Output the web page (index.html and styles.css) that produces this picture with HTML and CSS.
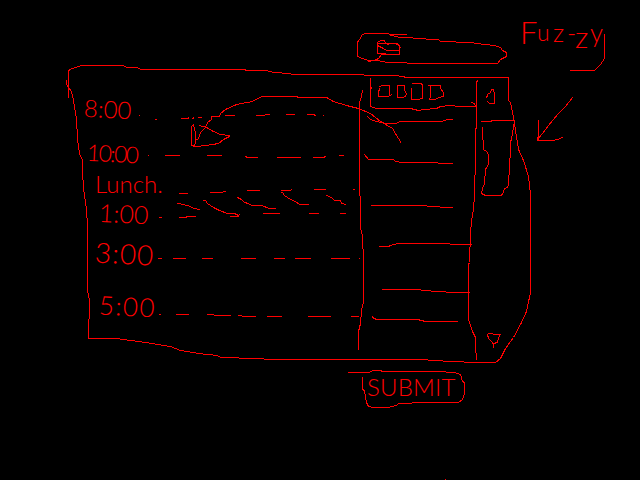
FILE: index.html
```
<!DOCTYPE html>
<html lang="en">
<head>
<meta charset="utf-8">
<title>Day planner sketch</title>
<link rel="stylesheet" href="styles.css">
</head>
<body>
<div class="page">
  <header class="top">
    <svg class="ink search" viewBox="340 0 180 65" width="180" height="65">
      <g transform="translate(.5 .5)">
        <path d="M406 34H389L388 33H364L361 35L359 40L357 41V56L362 58L368 60H379L380 61L388 62L425 63H497L500 59L506 56V52L502 50L500 47L494 45L484 44L470 42L440 41L438 39L413 38L412 37H398L397 36L390 35L388 33"/>
        <path d="M377 45V42L380 40H384L385 43H397L400 47L398 50H386L383 48L377 45V53H385M377 43H385L388 44L391 42M395 43L399 45V54H381L378 58L374 60L368 61"/>
      </g>
    </svg>
    <div class="brand">
      <span class="brand-f">F</span><span class="brand-u">u</span><span class="brand-z">z</span><span class="brand-dash">-</span><span class="brand-z2">z</span><span class="brand-y">y</span>
    </div>
  </header>

  <main class="middle">
    <section class="board">
      <svg class="ink board-lines" viewBox="0 65 535 300" width="535" height="300">
        <g transform="translate(.5 .5)">
          <!-- frame -->
          <path d="M68 97V71L69 69L75 67L81 65H122L127 67H136L141 69H244L246 70L265 70L274 72L289 73L292 74H363L364 75H397L400 76L408 77H508V100L510 102L513 117L515 130L518 149L523 160L528 176L530 194V292L526 311L521 322L513 337L505 348L500 358L495 362H469L457 361L428 360L427 359H271L256 358L220 357L217 355L198 353L180 350L170 346L145 342L123 339L116 338H88V319L89 318V300L87 290V223L85 200L84 197L82 174V160L79 153L77 139L76 118L73 100L71 91L68 87L66 84V79"/>
          <!-- column dividers -->
          <path d="M362 90L361 96L359 102V195L360 196V228L362 235V248L363 249V301L361 310L360 323L358 331V349"/>
          <path d="M477 80L476 82V127L475 129V174L474 175V195L473 208L471 221L470 232L469 262L468 264V319L472 331L475 337V352L476 353V359"/>
          <!-- toolbar -->
          <path d="M370 77V106L376 108H410L418 110L424 109L436 108L440 106L449 105L460 106H475L474 103L471 102M371 86V88"/>
          <path d="M379 86L382 85H389V95L388 96H378V92L379 88M389 95L392 94M396 85H404V90L406 93L405 96L402 97H397V85M411 84L412 83H421L422 85V98L417 99H411V87M427 85H440V88L443 92V96L438 97L435 99H429L430 96V85"/>
          <!-- scrollbar -->
          <path d="M487 101L489 103H494V94L493 89H491L490 92L487 94L486 98M480 121H490L492 120H514L513 127L511 139L510 141L509 174L508 175V184L507 187L504 188L502 194L500 195H485L481 193L482 188L484 183L485 168L487 167L488 163V154L486 151L483 149V140L482 139V126"/>
          <path d="M487 333H492L493 334H500L498 337L497 342L493 343V347M493 344L491 341L488 338L487 334"/>
          <!-- entries -->
          <path d="M367 116L370 119L376 121L386 123H396L399 121H441L447 119H452M364 154L368 159H393L395 161L402 162H437L438 163H452M370 205H426L427 206H439L440 207H452M378 246H388L390 245L397 243H449L450 244H471M381 289H420L421 290H430L431 291H445L446 292H469M372 315V317L376 319H417L425 321H457"/>
          <!-- drag arrow -->
          <path d="M401 143L398 138L392 128L380 121L370 113L358 108L346 105L333 101L326 97H298L296 96H262L257 98L252 101L236 104L225 109L220 113L219 116H211V119L207 122L205 127L200 132L198 138L195 140M193 124L191 126V145L194 146L195 142V133L193 124M199 125L206 127L213 131L220 134L229 135V136L223 139L218 143L206 145L196 146L193 145"/>
          <!-- slot rules -->
          <path d="M138 115H139M154 119H156M180 118H187L189 117M192 118L194 117M197 117H201M224 115H234M255 115H264L265 114H269M285 114H294M306 114H312L316 115M322 115H323"/>
          <path d="M147 155H148M164 155H179M206 155H221M245 156L247 157H257M276 157H300M312 157H322L326 156M338 155H343V154"/>
          <path d="M178 193H187M209 192H219L226 191M246 190H259M280 190H289L292 189M313 189H325M352 189H354"/>
          <path d="M177 203L183 204L190 206L193 208L200 209M202 200H205L207 203L213 207L219 210L227 213H234L238 215L239 214M229 216H238M237 197L241 199L244 202L248 203L251 205H261L269 208H275M280 192H282L284 195L290 199L295 201L299 204H308M326 195L331 197L334 200H340L341 203L346 204"/>
          <path d="M158 217H161M178 217H185L187 216H195M262 213H279M308 213H318M339 213H345"/>
          <path d="M157 258H161M172 258H185M201 258H212M240 258H255M273 258H284M294 258H310M330 258H349M358 258H359"/>
          <path d="M158 314H160M175 314H188M206 314H213L214 315H230M237 315H241L242 316H255M266 316H281M307 316H330M350 316H358"/>
        </g>
      </svg>
      <ul class="times">
        <li class="t8"><span>8:00</span></li>
        <li class="t10"><span>10:00</span></li>
        <li class="lunch"><span>Lunch.</span></li>
        <li class="t1"><span>1:00</span></li>
        <li class="t3"><span>3:00</span></li>
        <li class="t5"><span>5:00</span></li>
      </ul>
    </section>
    <svg class="ink note" viewBox="535 65 105 300" width="105" height="300">
      <g transform="translate(.5 .5)">
        <path d="M569 70H594L600 64L604 58V33"/>
        <path d="M572 97L565 106L558 113L548 125L542 133L537 139V136M538 119V140M536 140H553L560 138L563 136"/>
      </g>
    </svg>
  </main>

  <footer class="bottom">
    <button class="submit">
      <svg class="ink submit-frame" viewBox="345 365 125 50" width="125" height="50">
        <g transform="translate(.5 .5)">
          <path d="M347 372H368L373 370H380L382 371H445L446 372H454L460 374L462 381L464 382V393L462 399L458 402H412L411 403H398L396 405L387 407H373L368 406L366 402L364 390L362 389V376"/>
          <path d="M444 479H445"/>
        </g>
      </svg>
      <span class="submit-text">SUBMIT</span>
    </button>
  </footer>
</div>
</body>
</html>
```
FILE: styles.css
```
* { box-sizing: border-box; }

body {
  margin: 0;
  background: #000;
  color: #f00;
  font-family: Lato, "Liberation Sans", sans-serif;
  font-weight: 300;
}

.page {
  display: flex;
  flex-direction: column;
  width: 640px;
  height: 480px;
  overflow: hidden;
}

.ink {
  display: block;
  flex: none;
  overflow: visible;
  fill: none;
  stroke: #f00;
  stroke-width: 1;
  shape-rendering: crispEdges;
}

.top {
  display: flex;
  height: 65px;
  padding-left: 340px;
}

.brand {
  display: flex;
  align-items: flex-start;
  padding-top: 17px;
  font-size: 25px;
  line-height: 30px;
}

.brand span { flex: none; }
.brand-f { width: 17px; font-size: 31px; }
.brand-u { width: 16px; font-size: 23px; }
.brand-z { width: 14px; }
.brand-dash { width: 8px; }
.brand-z2 { width: 15px; padding-top: 4px; font-size: 30px; }
.brand-y { font-size: 26px; }

.middle {
  display: flex;
  height: 300px;
}

.board {
  display: grid;
  width: 535px;
}

.board-lines,
.times { grid-area: 1 / 1; }

.times {
  display: flex;
  flex-direction: column;
  margin: 0;
  padding: 29px 0 0 84px;
  list-style: none;
  font-size: 26px;
  line-height: 30px;
}

.times li { height: 30px; white-space: nowrap; }
.times span { display: inline-block; transform: rotate(3deg); }
.times .t8 { height: 44px; font-size: 24px; }
.times .t10 { height: 31px; padding-left: 3px; font-size: 23px; letter-spacing: -1.7px; }
.times .lunch { height: 29px; padding-left: 11px; font-size: 24px; }
.times .lunch span { transform: none; }
.times .t1 { height: 40px; padding-left: 15px; font-size: 25px; }
.times .t3 { height: 53px; padding-left: 11px; font-size: 28px; letter-spacing: 1px; }
.times .t5 { padding-left: 15px; font-size: 26px; letter-spacing: 1.4px; }

.bottom {
  display: flex;
  padding-left: 345px;
}

.submit {
  display: grid;
  padding: 0;
  border: 0;
  background: none;
  color: inherit;
  font: inherit;
  font-size: 24px;
}

.submit-frame,
.submit-text { grid-area: 1 / 1; }

.submit-text {
  padding: 7px 0 0 22px;
  line-height: 30px;
  text-align: left;
  letter-spacing: .2px;
}
```
